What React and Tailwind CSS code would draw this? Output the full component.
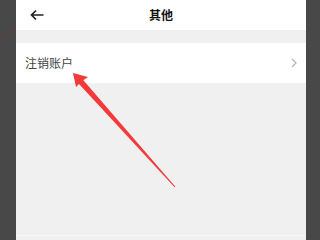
import React from "react";

export default function App() {
  return (
    <div
      className="relative w-[320px] h-[240px] overflow-hidden flex bg-[#484848]"
      style={{ fontFamily: '"Noto Sans CJK SC", "Noto Sans", sans-serif' }}
    >
      <div className="w-[16px] h-full bg-[#484848] relative">
        <svg width="16" height="240" className="absolute left-0 top-0">
          <line x1="0" y1="38" x2="15" y2="30" stroke="#7a3a3a" strokeWidth="0.8" />
        </svg>
      </div>
      <div className="w-[290px] h-full bg-[#f0f0f0] flex flex-col">
        <div className="h-[30px] bg-white flex items-center relative shrink-0">
          <div className="pl-[14px] flex items-center">
            <svg width="14" height="12" viewBox="0 0 14 12">
              <path d="M13.5 6H1.5M6 1.5L1.5 6L6 10.5" fill="none" stroke="#222" strokeWidth="1.7" />
            </svg>
          </div>
          <div className="absolute left-0 right-0 text-center text-[12px] font-bold text-[#111] leading-none">
            其他
          </div>
        </div>
        <div className="h-[13px] shrink-0" />
        <div className="h-[40px] bg-white flex items-center justify-between pl-[9px] pr-[9px] shrink-0">
          <span className="text-[12px] text-[#444] leading-none">注销账户</span>
          <svg width="6" height="10" viewBox="0 0 6 10">
            <path d="M1 1L5 5L1 9" fill="none" stroke="#b0b0b0" strokeWidth="1.1" />
          </svg>
        </div>
        <div className="flex-1" />
        <div className="h-[1px] bg-[#f7f7f7] mb-[4px]" />
      </div>
      <div className="flex-1 h-full bg-[#484848]" />
      <svg width="320" height="240" className="absolute left-0 top-0 pointer-events-none">
        <polygon
          points="73,73 88,77 83.4,80.2 175.4,186.7 174.6,187.3 79,84 76,87"
          fill="#f23a3a"
        />
      </svg>
    </div>
  );
}
